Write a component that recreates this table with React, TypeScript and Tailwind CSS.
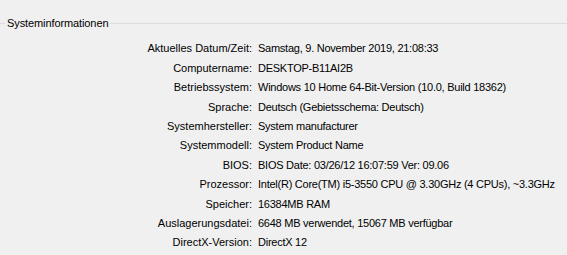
const rows: [string, string][] = [
  ['Aktuelles Datum/Zeit:', 'Samstag, 9. November 2019, 21:08:33'],
  ['Computername:', 'DESKTOP-B11AI2B'],
  ['Betriebssystem:', 'Windows 10 Home 64-Bit-Version (10.0, Build 18362)'],
  ['Sprache:', 'Deutsch (Gebietsschema: Deutsch)'],
  ['Systemhersteller:', 'System manufacturer'],
  ['Systemmodell:', 'System Product Name'],
  ['BIOS:', 'BIOS Date: 03/26/12 16:07:59 Ver: 09.06'],
  ['Prozessor:', 'Intel(R) Core(TM) i5-3550 CPU @ 3.30GHz (4 CPUs), ~3.3GHz'],
  ['Speicher:', '16384MB RAM'],
  ['Auslagerungsdatei:', '6648 MB verwendet, 15067 MB verfügbar'],
  ['DirectX-Version:', 'DirectX 12'],
];

export default function App() {
  return (
    <div className="h-[255px] w-[567px] overflow-hidden bg-[#f0f0f0] font-['Liberation_Sans',sans-serif] text-[11px] text-black">
      <div className="flex items-center pt-[17px]">
        <div className="h-px w-[5px] bg-[#dcdcdc]" />
        <span className="px-[2px] leading-[13px] tracking-[-0.1px]">Systeminformationen</span>
        <div className="h-px flex-1 bg-[#dcdcdc]" />
      </div>
      <div className="mt-[9px] flex flex-col">
        {rows.map(([label, value]) => (
          <div key={label} className="flex h-[19.4px] items-center">
            <span className="w-[252px] shrink-0 text-right">{label}</span>
            <span className="pl-[6px] whitespace-nowrap tracking-[-0.25px]">{value}</span>
          </div>
        ))}
      </div>
    </div>
  );
}
